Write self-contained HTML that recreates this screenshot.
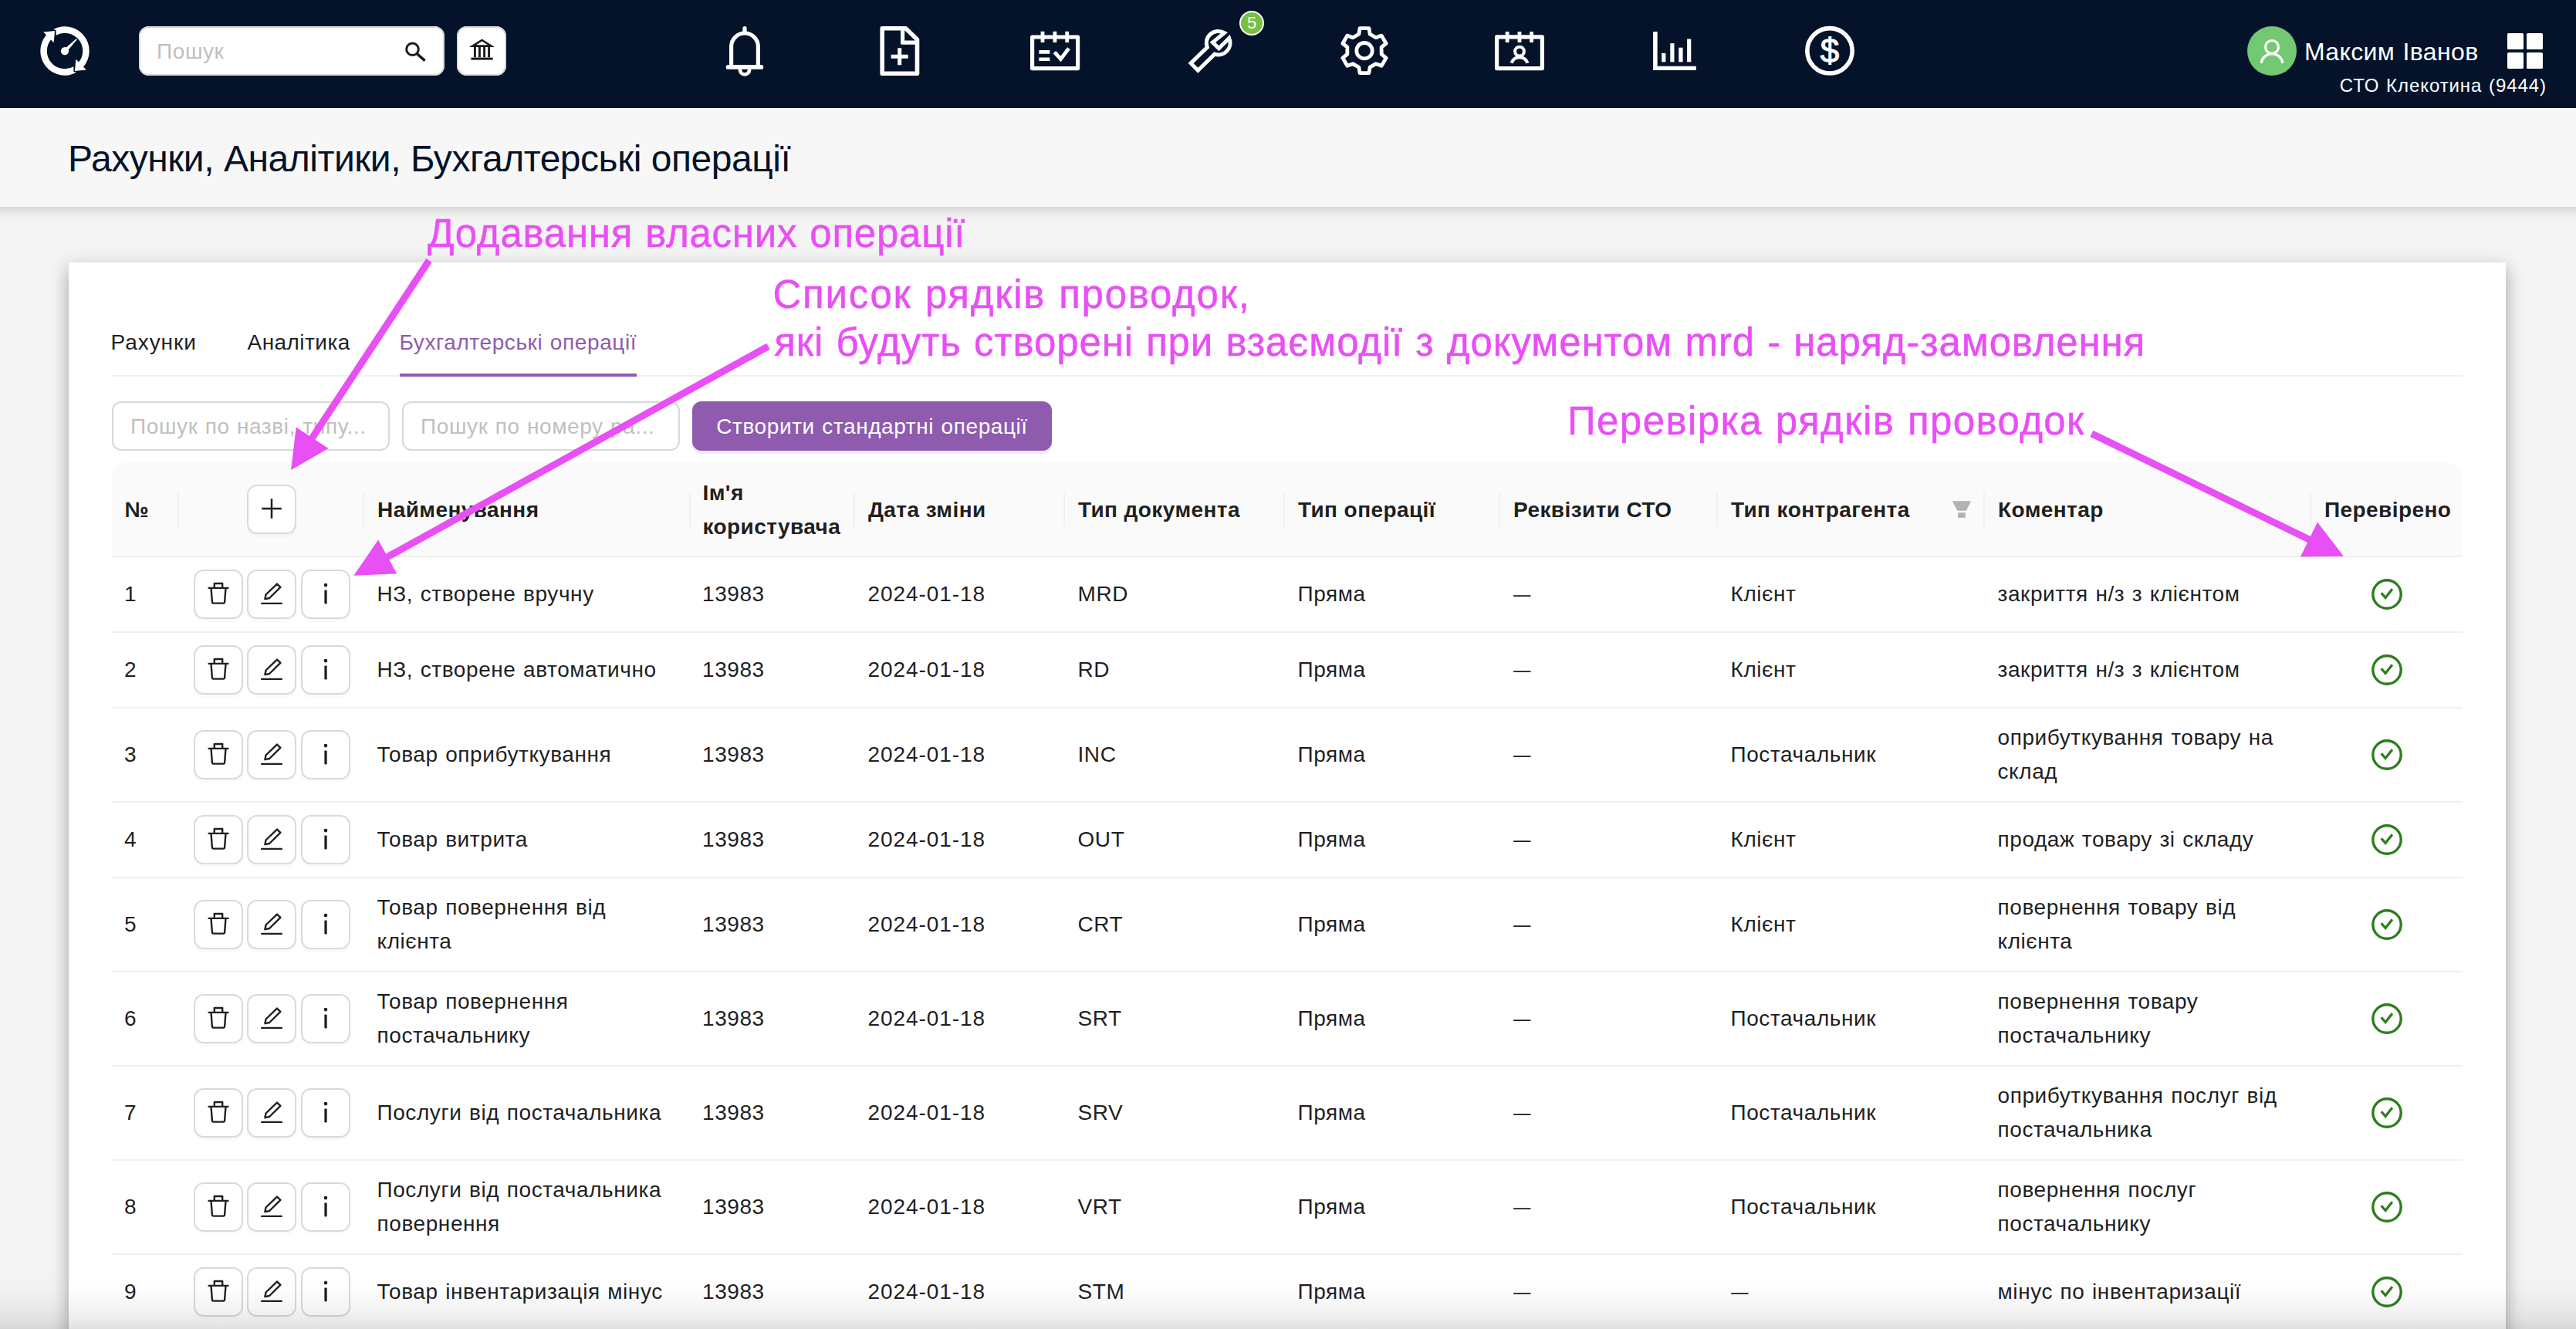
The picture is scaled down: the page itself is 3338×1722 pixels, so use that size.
<!DOCTYPE html>
<html lang="uk"><head><meta charset="utf-8"><title>Рахунки, Аналітики, Бухгалтерські операції</title>
<style>
*{margin:0;padding:0;box-sizing:border-box}
html,body{width:3338px;height:1722px;overflow:hidden;background:#f4f4f4}
body{position:relative;font-family:"Liberation Sans",sans-serif;font-size:28px;color:#1f1f1f;letter-spacing:.58px;word-spacing:1.2px}
.abs{position:absolute}
svg{display:block;overflow:visible}
.hdr{left:0;top:0;width:3338px;height:140px;background:#05132a}
.sub{left:-60px;top:140px;width:3458px;height:128px;background:#f7f7f7;box-shadow:0 4px 14px rgba(0,0,0,.17)}
.title{left:88px;top:176px;font-size:48px;line-height:60px;color:#05132a;letter-spacing:-.47px;word-spacing:0;white-space:nowrap}
.search{left:180px;top:34px;width:396px;height:64px;background:#fff;border-radius:13px;box-shadow:inset 0 0 0 2px #d9d9d9}
.search span{position:absolute;left:23px;top:11px;line-height:44px;color:#bfbfbf;font-size:28px;letter-spacing:.6px}
.bank{left:592px;top:34px;width:64px;height:64px;background:#fff;border-radius:13px;box-shadow:inset 0 0 0 2px #d9d9d9}
.uname{left:2986px;top:45px;font-size:32px;line-height:44px;color:#fff;letter-spacing:.35px;white-space:nowrap}
.usub{right:38px;top:96px;font-size:24px;line-height:30px;color:#fff;letter-spacing:.92px;white-space:nowrap}
.avatar{left:2912px;top:34px;width:64px;height:64px;border-radius:50%;background:#73c873}
.card{left:89px;top:340px;width:3158px;height:1500px;background:#fff;box-shadow:0 8px 22px rgba(0,0,0,.34)}
.tab{top:421.5px;line-height:44px;white-space:nowrap;letter-spacing:.85px}
.tabline{left:145px;top:486px;width:3046px;height:2px;background:#f0f0f0}
.ink{left:518px;top:484px;width:307px;height:4px;background:#8f5bae}
.inp{top:520px;width:360px;height:64px;border:2px solid #d9d9d9;border-radius:12px;background:#fff;color:#bfbfbf;line-height:60px;padding:1px 0 0 22px;letter-spacing:.62px;word-spacing:.8px;white-space:nowrap;overflow:hidden}
.pbtn{left:897px;top:520px;width:466px;height:64px;border-radius:12px;background:#8f5bae;color:#fff;line-height:66px;text-align:center;box-shadow:0 4px 0 rgba(143,91,174,.13);white-space:nowrap}
.thead{background:#fafafa;border-radius:16px 16px 0 0}
.hline,.rline{height:2px;background:#f0f0f0}
.sep{width:2px;height:45px;background:#f0f0f0}
.th,.td{display:flex;align-items:center;line-height:44px;white-space:nowrap}
.th{font-weight:700;letter-spacing:.42px;word-spacing:0}
.dt{letter-spacing:.92px}
.dash{display:inline-block;font-style:normal;transform:scaleX(.8);transform-origin:0 50%;letter-spacing:0}
.btn{width:64px;height:64px;background:#fff;border:2px solid #d9d9d9;border-radius:13px;box-shadow:0 4px 0 rgba(0,0,0,.02);display:flex;align-items:center;justify-content:center}
.btn svg{margin-top:-3px}
.fade{left:0;top:1650px;width:3338px;height:72px;background:linear-gradient(to bottom,rgba(0,0,0,0) 0,rgba(0,0,0,.012) 30%,rgba(0,0,0,.04) 60%,rgba(0,0,0,.075) 82%,rgba(0,0,0,.12) 100%)}
</style></head><body>
<div class="abs hdr"></div>
<svg class="abs" style="left:52px;top:34px" width="64" height="64" viewBox="0 0 64 64" fill="#fff"><path d="M17.31 3.91A31.7 31.7 0 0 1 56.02 52.69L59.87 56.62L44.98 57.98L46.33 42.81L50.04 46.59A23.2 23.2 0 0 0 20.65 11.77L20.65 5.3Z"/><path d="M17.31 3.91A31.7 31.7 0 0 1 56.02 52.69L59.87 56.62L44.98 57.98L46.33 42.81L50.04 46.59A23.2 23.2 0 0 0 20.65 11.77L20.65 5.3Z" transform="rotate(180 32 32)"/><circle cx="32" cy="32.1" r="5.15"/><path d="M33.2 28L46.8 16.2L47.8 17.2L36.2 30.9Z"/></svg>
<div class="abs search"><span>Пошук</span>
<svg class="abs" style="left:340px;top:16px" width="34" height="34" viewBox="0 0 34 34" fill="none" stroke="#1a1a1a" stroke-width="3" stroke-linecap="butt"><circle cx="14.5" cy="13.75" r="7.8"/><path d="M20 19.4L30.6 28.6" stroke-width="3.4"/></svg></div>
<div class="abs bank"><svg class="abs" style="left:17.5px;top:15px" width="29" height="30" viewBox="0 0 29 30" fill="none" stroke="#1a1a1a" stroke-width="2.8" stroke-linejoin="miter"><path d="M2.4 10.6L14.5 3L26.6 10.6Z" stroke-width="2.6"/><path d="M5.4 12V25.2M11.4 12V25.2M17.6 12V25.2M23.6 12V25.2" stroke-width="2.9"/><path d="M0.4 27.1H28.6" stroke-width="3"/></svg></div>
<svg class="abs" style="left:933px;top:34px" width="64" height="64" viewBox="0 0 64 64" fill="none" stroke="#fff" stroke-width="5.2" stroke-linecap="round" stroke-linejoin="round">
<path d="M32 2.6V6"/><path d="M14.6 52.6V26.4a17.4 17.4 0 0 1 34.8 0V52.6"/><path d="M10.6 52.9H53.4" stroke-width="5.8"/><path d="M26 56.4a6 6 0 0 0 12 0" stroke-width="4.8"/></svg>
<svg class="abs" style="left:1134px;top:34px" width="64" height="64" viewBox="0 0 64 64" fill="none" stroke="#fff" stroke-width="5.6" stroke-linejoin="round">
<path d="M9.2 2.8H39.6L54.5 17.2V61.2H9.2Z"/><path d="M35.6 3V21.2H54.2" stroke-width="5.2"/><path d="M31.7 28.2V50.2M20.7 39.2H42.7" stroke-width="5" stroke-linecap="butt"/></svg>
<svg class="abs" style="left:1335px;top:34px" width="64" height="64" viewBox="0 0 64 64" fill="none" stroke="#fff" stroke-width="5.2" stroke-linejoin="round">
<path d="M2.6 14H61.6V54.6H2.6Z"/><path d="M16 6.8V20.9M31.9 6.8V20.9M47.7 6.8V20.9" stroke-width="4.8"/><path d="M11.4 33.4H25.3M11.4 42.7H25.3" stroke-width="4.6"/><path d="M31.4 33.6L39.5 42.4L50 28.6" stroke-width="4.8" stroke-linejoin="miter"/></svg>
<svg class="abs" style="left:1536px;top:34px" width="64" height="64" viewBox="0 0 64 64" fill="none" stroke="#fff" stroke-width="5" stroke-linejoin="miter">
<path d="M50.6 8.6A15.4 15.4 0 0 0 28.3 27.4L7.1 47.9L16.3 57.2L37.9 36.2A15.4 15.4 0 0 0 56.8 15.4L43.4 28.8L35.4 20.9Z"/></svg>
<div class="abs" style="left:1606px;top:14px;width:32px;height:32px;border-radius:50%;background:#76c043;border:2px solid #fff;box-sizing:border-box;color:#fff;font-size:22px;line-height:28px;letter-spacing:0;text-align:center">5</div>
<svg class="abs" style="left:1736px;top:34px" width="64" height="64" viewBox="0 0 64 64" fill="none" stroke="#fff" stroke-width="4.8" stroke-linejoin="round">
<path d="M39.17 10.27L37.90 2.69L26.10 2.69L24.83 10.27L17.02 14.77L9.83 12.09L3.93 22.31L9.85 27.19L9.85 36.21L3.93 41.09L9.83 51.31L17.02 48.63L24.83 53.13L26.10 60.71L37.90 60.71L39.17 53.13L46.98 48.63L54.17 51.31L60.07 41.09L54.15 36.21L54.15 27.19L60.07 22.31L54.17 12.09L46.98 14.77Z"/><circle cx="32" cy="31.7" r="10.2"/></svg>
<svg class="abs" style="left:1937px;top:34px" width="64" height="64" viewBox="0 0 64 64" fill="none" stroke="#fff" stroke-width="5.2" stroke-linejoin="round">
<path d="M2.6 13.8H61.4V54.6H2.6Z"/><path d="M16.1 7V20.9M32 7V20.9M47.6 7V20.9" stroke-width="4.8"/><circle cx="32" cy="32.6" r="5.9" stroke-width="4"/><path d="M21.6 47.7a10.9 10.9 0 0 1 20.8 0" stroke-width="4.4"/></svg>
<svg class="abs" style="left:2138px;top:34px" width="64" height="64" viewBox="0 0 64 64" fill="#fff">
<path d="M4.1 7H9.7V51.8H59.8V57H4.1Z"/><rect x="15.2" y="34.9" width="5.2" height="11.4"/><rect x="26.3" y="22.1" width="5.2" height="24.2"/><rect x="37.3" y="27.7" width="5.3" height="18.6"/><rect x="48.1" y="16.5" width="5.2" height="29.8"/></svg>
<svg class="abs" style="left:2339px;top:34px" width="64" height="64" viewBox="0 0 64 64">
<circle cx="32" cy="31.8" r="29.2" fill="none" stroke="#fff" stroke-width="5.6"/><text x="32" y="47" text-anchor="middle" font-family="Liberation Sans, sans-serif" font-size="44" fill="#fff" stroke="#fff" stroke-width="1.1" letter-spacing="0">$</text></svg>
<div class="abs avatar"><svg class="abs" style="left:0;top:0" width="64" height="64" viewBox="0 0 64 64" fill="none" stroke="#fff" stroke-width="3.2" stroke-linecap="butt"><circle cx="32" cy="26.9" r="8.4"/><path d="M18.2 47.8a13.9 13.9 0 0 1 27.6 0"/></svg></div>
<div class="abs uname">Максим Іванов</div>
<svg class="abs" style="left:3249px;top:43px" width="46" height="46" viewBox="0 0 46 46" fill="#fff"><rect x="0" y="0" width="21" height="21" rx="1.6"/><rect x="25" y="0" width="21" height="21" rx="1.6"/><rect x="0" y="25" width="21" height="21" rx="1.6"/><rect x="25" y="25" width="21" height="21" rx="1.6"/></svg>
<div class="abs usub">СТО Клекотина (9444)</div>
<div class="abs sub"></div>
<div class="abs title">Рахунки, Аналітики, Бухгалтерські операції</div>
<div class="abs card"></div>
<div class="abs tab" style="left:143.5px;letter-spacing:.95px">Рахунки</div>
<div class="abs tab" style="left:320.5px;letter-spacing:.45px">Аналітика</div>
<div class="abs tab" style="left:517.5px;color:#8f5bae;letter-spacing:.6px">Бухгалтерські операції</div>
<div class="abs tabline"></div><div class="abs ink"></div>
<div class="abs inp" style="left:145px">Пошук по назві, типу...</div>
<div class="abs inp" style="left:521px">Пошук по номеру ра...</div>
<div class="abs pbtn">Створити стандартні операції</div>
<div class="abs thead" style="left:145px;top:600px;width:3046px;height:120px"></div>
<div class="abs hline" style="left:145px;top:720px;width:3046px"></div>
<div class="abs sep" style="left:230px;top:638px"></div>
<div class="abs th" style="left:161.5px;top:601px;height:120px;width:54px"><span>№</span></div>
<div class="abs sep" style="left:470px;top:638px"></div>
<div class="abs btn" style="left:320px;top:628px"><svg width="28" height="28" viewBox="0 0 28 28" fill="none" stroke="#1f1f1f" stroke-width="2.5" stroke-linecap="butt"><path d="M14 1.2V26.8M1.2 14H26.8"/></svg></div>
<div class="abs sep" style="left:893px;top:638px"></div>
<div class="abs th" style="left:489px;top:601px;height:120px;width:391px"><span>Найменування</span></div>
<div class="abs sep" style="left:1106px;top:638px"></div>
<div class="abs th" style="left:910.5px;top:601px;height:120px;width:181px"><span>Ім'я<br>користувача</span></div>
<div class="abs sep" style="left:1378px;top:638px"></div>
<div class="abs th" style="left:1125px;top:601px;height:120px;width:240px"><span>Дата зміни</span></div>
<div class="abs sep" style="left:1663px;top:638px"></div>
<div class="abs th" style="left:1397px;top:601px;height:120px;width:253px"><span>Тип документа</span></div>
<div class="abs sep" style="left:1942px;top:638px"></div>
<div class="abs th" style="left:1682px;top:601px;height:120px;width:247px"><span>Тип операції</span></div>
<div class="abs sep" style="left:2224px;top:638px"></div>
<div class="abs th" style="left:1961px;top:601px;height:120px;width:250px"><span>Реквізити СТО</span></div>
<div class="abs sep" style="left:2570px;top:638px"></div>
<div class="abs th" style="left:2243px;top:601px;height:120px;width:314px"><span>Тип контрагента</span></div>
<div class="abs sep" style="left:2993px;top:638px"></div>
<div class="abs th" style="left:2589px;top:601px;height:120px;width:391px"><span>Коментар</span></div>
<div class="abs th" style="left:3012px;top:601px;height:120px;width:165px"><span>Перевірено</span></div>
<svg class="abs" style="left:2529px;top:649px" width="26" height="22" viewBox="0 0 26 22" fill="#b3b3b3"><path d="M0.8 0.2H25.2L18.8 12.7H7.4Z"/><rect x="8" y="15.2" width="9.9" height="6.7"/></svg>
<div class="abs td" style="left:161.0px;top:722px;height:96px;width:54px"><span>1</span></div>
<div class="abs btn" style="left:251px;top:738.0px"><svg width="28" height="28" viewBox="0 0 27.2 28" fill="none" stroke="#1f1f1f" stroke-width="2.4" stroke-linejoin="round" stroke-linecap="round"><path d="M1.2 6.9H26"/><path d="M8.4 6.9V1H18.8V6.9" stroke-linecap="butt"/><path d="M4.1 6.9L5.5 25a1.7 1.7 0 0 0 1.7 1.6H20a1.7 1.7 0 0 0 1.7-1.6L23.1 6.9" stroke-linecap="butt"/></svg></div>
<div class="abs btn" style="left:320px;top:738.0px"><svg width="28" height="28" viewBox="0 0 27.2 28" fill="none" stroke="#1f1f1f" stroke-width="2.4" stroke-linejoin="round" stroke-linecap="round"><path d="M0.8 26.9H26.4"/><path d="M5 21.2L6.1 15.5L20.6 1.6L25 5.9L10.7 20Z"/></svg></div>
<div class="abs btn" style="left:390px;top:738.0px"><svg width="28" height="28" viewBox="0 0 27.2 28"><circle cx="13.6" cy="3.1" r="2.3" fill="#1f1f1f"/><rect x="12" y="9.6" width="3.3" height="17.8" rx="0.8" fill="#1f1f1f"/></svg></div>
<div class="abs td" style="left:488.5px;top:722px;height:96px;width:391px"><span>НЗ, створене вручну</span></div>
<div class="abs td" style="left:910.0px;top:722px;height:96px;width:181px"><span>13983</span></div>
<div class="abs td dt" style="left:1124.5px;top:722px;height:96px;width:240px"><span>2024-01-18</span></div>
<div class="abs td" style="left:1396.5px;top:722px;height:96px;width:253px"><span>MRD</span></div>
<div class="abs td" style="left:1681.5px;top:722px;height:96px;width:247px"><span>Пряма</span></div>
<div class="abs td" style="left:1960.5px;top:722px;height:96px;width:250px"><span><i class="dash">—</i></span></div>
<div class="abs td" style="left:2242.5px;top:722px;height:96px;width:314px"><span>Клієнт</span></div>
<div class="abs td" style="left:2588.5px;top:722px;height:96px;width:391px"><span>закриття н/з з клієнтом</span></div>
<div class="abs" style="left:3073px;top:750.0px;width:40px;height:40px"><svg width="40" height="40" viewBox="0 0 40 40" fill="none" stroke="#2e7d1f"><circle cx="20" cy="20" r="18.2" stroke-width="3.4"/><path d="M12.7 18.2L18.1 24.5L26.9 13.2" stroke-width="3.3" stroke-linejoin="miter"/></svg></div>
<div class="abs rline" style="left:145px;top:818px;width:3046px"></div>
<div class="abs td" style="left:161.0px;top:820px;height:96px;width:54px"><span>2</span></div>
<div class="abs btn" style="left:251px;top:836.0px"><svg width="28" height="28" viewBox="0 0 27.2 28" fill="none" stroke="#1f1f1f" stroke-width="2.4" stroke-linejoin="round" stroke-linecap="round"><path d="M1.2 6.9H26"/><path d="M8.4 6.9V1H18.8V6.9" stroke-linecap="butt"/><path d="M4.1 6.9L5.5 25a1.7 1.7 0 0 0 1.7 1.6H20a1.7 1.7 0 0 0 1.7-1.6L23.1 6.9" stroke-linecap="butt"/></svg></div>
<div class="abs btn" style="left:320px;top:836.0px"><svg width="28" height="28" viewBox="0 0 27.2 28" fill="none" stroke="#1f1f1f" stroke-width="2.4" stroke-linejoin="round" stroke-linecap="round"><path d="M0.8 26.9H26.4"/><path d="M5 21.2L6.1 15.5L20.6 1.6L25 5.9L10.7 20Z"/></svg></div>
<div class="abs btn" style="left:390px;top:836.0px"><svg width="28" height="28" viewBox="0 0 27.2 28"><circle cx="13.6" cy="3.1" r="2.3" fill="#1f1f1f"/><rect x="12" y="9.6" width="3.3" height="17.8" rx="0.8" fill="#1f1f1f"/></svg></div>
<div class="abs td" style="left:488.5px;top:820px;height:96px;width:391px"><span>НЗ, створене автоматично</span></div>
<div class="abs td" style="left:910.0px;top:820px;height:96px;width:181px"><span>13983</span></div>
<div class="abs td dt" style="left:1124.5px;top:820px;height:96px;width:240px"><span>2024-01-18</span></div>
<div class="abs td" style="left:1396.5px;top:820px;height:96px;width:253px"><span>RD</span></div>
<div class="abs td" style="left:1681.5px;top:820px;height:96px;width:247px"><span>Пряма</span></div>
<div class="abs td" style="left:1960.5px;top:820px;height:96px;width:250px"><span><i class="dash">—</i></span></div>
<div class="abs td" style="left:2242.5px;top:820px;height:96px;width:314px"><span>Клієнт</span></div>
<div class="abs td" style="left:2588.5px;top:820px;height:96px;width:391px"><span>закриття н/з з клієнтом</span></div>
<div class="abs" style="left:3073px;top:848.0px;width:40px;height:40px"><svg width="40" height="40" viewBox="0 0 40 40" fill="none" stroke="#2e7d1f"><circle cx="20" cy="20" r="18.2" stroke-width="3.4"/><path d="M12.7 18.2L18.1 24.5L26.9 13.2" stroke-width="3.3" stroke-linejoin="miter"/></svg></div>
<div class="abs rline" style="left:145px;top:916px;width:3046px"></div>
<div class="abs td" style="left:161.0px;top:918px;height:120px;width:54px"><span>3</span></div>
<div class="abs btn" style="left:251px;top:946.0px"><svg width="28" height="28" viewBox="0 0 27.2 28" fill="none" stroke="#1f1f1f" stroke-width="2.4" stroke-linejoin="round" stroke-linecap="round"><path d="M1.2 6.9H26"/><path d="M8.4 6.9V1H18.8V6.9" stroke-linecap="butt"/><path d="M4.1 6.9L5.5 25a1.7 1.7 0 0 0 1.7 1.6H20a1.7 1.7 0 0 0 1.7-1.6L23.1 6.9" stroke-linecap="butt"/></svg></div>
<div class="abs btn" style="left:320px;top:946.0px"><svg width="28" height="28" viewBox="0 0 27.2 28" fill="none" stroke="#1f1f1f" stroke-width="2.4" stroke-linejoin="round" stroke-linecap="round"><path d="M0.8 26.9H26.4"/><path d="M5 21.2L6.1 15.5L20.6 1.6L25 5.9L10.7 20Z"/></svg></div>
<div class="abs btn" style="left:390px;top:946.0px"><svg width="28" height="28" viewBox="0 0 27.2 28"><circle cx="13.6" cy="3.1" r="2.3" fill="#1f1f1f"/><rect x="12" y="9.6" width="3.3" height="17.8" rx="0.8" fill="#1f1f1f"/></svg></div>
<div class="abs td" style="left:488.5px;top:918px;height:120px;width:391px"><span>Товар оприбуткування</span></div>
<div class="abs td" style="left:910.0px;top:918px;height:120px;width:181px"><span>13983</span></div>
<div class="abs td dt" style="left:1124.5px;top:918px;height:120px;width:240px"><span>2024-01-18</span></div>
<div class="abs td" style="left:1396.5px;top:918px;height:120px;width:253px"><span>INC</span></div>
<div class="abs td" style="left:1681.5px;top:918px;height:120px;width:247px"><span>Пряма</span></div>
<div class="abs td" style="left:1960.5px;top:918px;height:120px;width:250px"><span><i class="dash">—</i></span></div>
<div class="abs td" style="left:2242.5px;top:918px;height:120px;width:314px"><span>Постачальник</span></div>
<div class="abs td" style="left:2588.5px;top:918px;height:120px;width:391px"><span>оприбуткування товару на<br>склад</span></div>
<div class="abs" style="left:3073px;top:958.0px;width:40px;height:40px"><svg width="40" height="40" viewBox="0 0 40 40" fill="none" stroke="#2e7d1f"><circle cx="20" cy="20" r="18.2" stroke-width="3.4"/><path d="M12.7 18.2L18.1 24.5L26.9 13.2" stroke-width="3.3" stroke-linejoin="miter"/></svg></div>
<div class="abs rline" style="left:145px;top:1038px;width:3046px"></div>
<div class="abs td" style="left:161.0px;top:1040px;height:96px;width:54px"><span>4</span></div>
<div class="abs btn" style="left:251px;top:1056.0px"><svg width="28" height="28" viewBox="0 0 27.2 28" fill="none" stroke="#1f1f1f" stroke-width="2.4" stroke-linejoin="round" stroke-linecap="round"><path d="M1.2 6.9H26"/><path d="M8.4 6.9V1H18.8V6.9" stroke-linecap="butt"/><path d="M4.1 6.9L5.5 25a1.7 1.7 0 0 0 1.7 1.6H20a1.7 1.7 0 0 0 1.7-1.6L23.1 6.9" stroke-linecap="butt"/></svg></div>
<div class="abs btn" style="left:320px;top:1056.0px"><svg width="28" height="28" viewBox="0 0 27.2 28" fill="none" stroke="#1f1f1f" stroke-width="2.4" stroke-linejoin="round" stroke-linecap="round"><path d="M0.8 26.9H26.4"/><path d="M5 21.2L6.1 15.5L20.6 1.6L25 5.9L10.7 20Z"/></svg></div>
<div class="abs btn" style="left:390px;top:1056.0px"><svg width="28" height="28" viewBox="0 0 27.2 28"><circle cx="13.6" cy="3.1" r="2.3" fill="#1f1f1f"/><rect x="12" y="9.6" width="3.3" height="17.8" rx="0.8" fill="#1f1f1f"/></svg></div>
<div class="abs td" style="left:488.5px;top:1040px;height:96px;width:391px"><span>Товар витрита</span></div>
<div class="abs td" style="left:910.0px;top:1040px;height:96px;width:181px"><span>13983</span></div>
<div class="abs td dt" style="left:1124.5px;top:1040px;height:96px;width:240px"><span>2024-01-18</span></div>
<div class="abs td" style="left:1396.5px;top:1040px;height:96px;width:253px"><span>OUT</span></div>
<div class="abs td" style="left:1681.5px;top:1040px;height:96px;width:247px"><span>Пряма</span></div>
<div class="abs td" style="left:1960.5px;top:1040px;height:96px;width:250px"><span><i class="dash">—</i></span></div>
<div class="abs td" style="left:2242.5px;top:1040px;height:96px;width:314px"><span>Клієнт</span></div>
<div class="abs td" style="left:2588.5px;top:1040px;height:96px;width:391px"><span>продаж товару зі складу</span></div>
<div class="abs" style="left:3073px;top:1068.0px;width:40px;height:40px"><svg width="40" height="40" viewBox="0 0 40 40" fill="none" stroke="#2e7d1f"><circle cx="20" cy="20" r="18.2" stroke-width="3.4"/><path d="M12.7 18.2L18.1 24.5L26.9 13.2" stroke-width="3.3" stroke-linejoin="miter"/></svg></div>
<div class="abs rline" style="left:145px;top:1136px;width:3046px"></div>
<div class="abs td" style="left:161.0px;top:1138px;height:120px;width:54px"><span>5</span></div>
<div class="abs btn" style="left:251px;top:1166.0px"><svg width="28" height="28" viewBox="0 0 27.2 28" fill="none" stroke="#1f1f1f" stroke-width="2.4" stroke-linejoin="round" stroke-linecap="round"><path d="M1.2 6.9H26"/><path d="M8.4 6.9V1H18.8V6.9" stroke-linecap="butt"/><path d="M4.1 6.9L5.5 25a1.7 1.7 0 0 0 1.7 1.6H20a1.7 1.7 0 0 0 1.7-1.6L23.1 6.9" stroke-linecap="butt"/></svg></div>
<div class="abs btn" style="left:320px;top:1166.0px"><svg width="28" height="28" viewBox="0 0 27.2 28" fill="none" stroke="#1f1f1f" stroke-width="2.4" stroke-linejoin="round" stroke-linecap="round"><path d="M0.8 26.9H26.4"/><path d="M5 21.2L6.1 15.5L20.6 1.6L25 5.9L10.7 20Z"/></svg></div>
<div class="abs btn" style="left:390px;top:1166.0px"><svg width="28" height="28" viewBox="0 0 27.2 28"><circle cx="13.6" cy="3.1" r="2.3" fill="#1f1f1f"/><rect x="12" y="9.6" width="3.3" height="17.8" rx="0.8" fill="#1f1f1f"/></svg></div>
<div class="abs td" style="left:488.5px;top:1138px;height:120px;width:391px"><span>Товар повернення від<br>клієнта</span></div>
<div class="abs td" style="left:910.0px;top:1138px;height:120px;width:181px"><span>13983</span></div>
<div class="abs td dt" style="left:1124.5px;top:1138px;height:120px;width:240px"><span>2024-01-18</span></div>
<div class="abs td" style="left:1396.5px;top:1138px;height:120px;width:253px"><span>CRT</span></div>
<div class="abs td" style="left:1681.5px;top:1138px;height:120px;width:247px"><span>Пряма</span></div>
<div class="abs td" style="left:1960.5px;top:1138px;height:120px;width:250px"><span><i class="dash">—</i></span></div>
<div class="abs td" style="left:2242.5px;top:1138px;height:120px;width:314px"><span>Клієнт</span></div>
<div class="abs td" style="left:2588.5px;top:1138px;height:120px;width:391px"><span>повернення товару від<br>клієнта</span></div>
<div class="abs" style="left:3073px;top:1178.0px;width:40px;height:40px"><svg width="40" height="40" viewBox="0 0 40 40" fill="none" stroke="#2e7d1f"><circle cx="20" cy="20" r="18.2" stroke-width="3.4"/><path d="M12.7 18.2L18.1 24.5L26.9 13.2" stroke-width="3.3" stroke-linejoin="miter"/></svg></div>
<div class="abs rline" style="left:145px;top:1258px;width:3046px"></div>
<div class="abs td" style="left:161.0px;top:1260px;height:120px;width:54px"><span>6</span></div>
<div class="abs btn" style="left:251px;top:1288.0px"><svg width="28" height="28" viewBox="0 0 27.2 28" fill="none" stroke="#1f1f1f" stroke-width="2.4" stroke-linejoin="round" stroke-linecap="round"><path d="M1.2 6.9H26"/><path d="M8.4 6.9V1H18.8V6.9" stroke-linecap="butt"/><path d="M4.1 6.9L5.5 25a1.7 1.7 0 0 0 1.7 1.6H20a1.7 1.7 0 0 0 1.7-1.6L23.1 6.9" stroke-linecap="butt"/></svg></div>
<div class="abs btn" style="left:320px;top:1288.0px"><svg width="28" height="28" viewBox="0 0 27.2 28" fill="none" stroke="#1f1f1f" stroke-width="2.4" stroke-linejoin="round" stroke-linecap="round"><path d="M0.8 26.9H26.4"/><path d="M5 21.2L6.1 15.5L20.6 1.6L25 5.9L10.7 20Z"/></svg></div>
<div class="abs btn" style="left:390px;top:1288.0px"><svg width="28" height="28" viewBox="0 0 27.2 28"><circle cx="13.6" cy="3.1" r="2.3" fill="#1f1f1f"/><rect x="12" y="9.6" width="3.3" height="17.8" rx="0.8" fill="#1f1f1f"/></svg></div>
<div class="abs td" style="left:488.5px;top:1260px;height:120px;width:391px"><span>Товар повернення<br>постачальнику</span></div>
<div class="abs td" style="left:910.0px;top:1260px;height:120px;width:181px"><span>13983</span></div>
<div class="abs td dt" style="left:1124.5px;top:1260px;height:120px;width:240px"><span>2024-01-18</span></div>
<div class="abs td" style="left:1396.5px;top:1260px;height:120px;width:253px"><span>SRT</span></div>
<div class="abs td" style="left:1681.5px;top:1260px;height:120px;width:247px"><span>Пряма</span></div>
<div class="abs td" style="left:1960.5px;top:1260px;height:120px;width:250px"><span><i class="dash">—</i></span></div>
<div class="abs td" style="left:2242.5px;top:1260px;height:120px;width:314px"><span>Постачальник</span></div>
<div class="abs td" style="left:2588.5px;top:1260px;height:120px;width:391px"><span>повернення товару<br>постачальнику</span></div>
<div class="abs" style="left:3073px;top:1300.0px;width:40px;height:40px"><svg width="40" height="40" viewBox="0 0 40 40" fill="none" stroke="#2e7d1f"><circle cx="20" cy="20" r="18.2" stroke-width="3.4"/><path d="M12.7 18.2L18.1 24.5L26.9 13.2" stroke-width="3.3" stroke-linejoin="miter"/></svg></div>
<div class="abs rline" style="left:145px;top:1380px;width:3046px"></div>
<div class="abs td" style="left:161.0px;top:1382px;height:120px;width:54px"><span>7</span></div>
<div class="abs btn" style="left:251px;top:1410.0px"><svg width="28" height="28" viewBox="0 0 27.2 28" fill="none" stroke="#1f1f1f" stroke-width="2.4" stroke-linejoin="round" stroke-linecap="round"><path d="M1.2 6.9H26"/><path d="M8.4 6.9V1H18.8V6.9" stroke-linecap="butt"/><path d="M4.1 6.9L5.5 25a1.7 1.7 0 0 0 1.7 1.6H20a1.7 1.7 0 0 0 1.7-1.6L23.1 6.9" stroke-linecap="butt"/></svg></div>
<div class="abs btn" style="left:320px;top:1410.0px"><svg width="28" height="28" viewBox="0 0 27.2 28" fill="none" stroke="#1f1f1f" stroke-width="2.4" stroke-linejoin="round" stroke-linecap="round"><path d="M0.8 26.9H26.4"/><path d="M5 21.2L6.1 15.5L20.6 1.6L25 5.9L10.7 20Z"/></svg></div>
<div class="abs btn" style="left:390px;top:1410.0px"><svg width="28" height="28" viewBox="0 0 27.2 28"><circle cx="13.6" cy="3.1" r="2.3" fill="#1f1f1f"/><rect x="12" y="9.6" width="3.3" height="17.8" rx="0.8" fill="#1f1f1f"/></svg></div>
<div class="abs td" style="left:488.5px;top:1382px;height:120px;width:391px"><span>Послуги від постачальника</span></div>
<div class="abs td" style="left:910.0px;top:1382px;height:120px;width:181px"><span>13983</span></div>
<div class="abs td dt" style="left:1124.5px;top:1382px;height:120px;width:240px"><span>2024-01-18</span></div>
<div class="abs td" style="left:1396.5px;top:1382px;height:120px;width:253px"><span>SRV</span></div>
<div class="abs td" style="left:1681.5px;top:1382px;height:120px;width:247px"><span>Пряма</span></div>
<div class="abs td" style="left:1960.5px;top:1382px;height:120px;width:250px"><span><i class="dash">—</i></span></div>
<div class="abs td" style="left:2242.5px;top:1382px;height:120px;width:314px"><span>Постачальник</span></div>
<div class="abs td" style="left:2588.5px;top:1382px;height:120px;width:391px"><span>оприбуткування послуг від<br>постачальника</span></div>
<div class="abs" style="left:3073px;top:1422.0px;width:40px;height:40px"><svg width="40" height="40" viewBox="0 0 40 40" fill="none" stroke="#2e7d1f"><circle cx="20" cy="20" r="18.2" stroke-width="3.4"/><path d="M12.7 18.2L18.1 24.5L26.9 13.2" stroke-width="3.3" stroke-linejoin="miter"/></svg></div>
<div class="abs rline" style="left:145px;top:1502px;width:3046px"></div>
<div class="abs td" style="left:161.0px;top:1504px;height:120px;width:54px"><span>8</span></div>
<div class="abs btn" style="left:251px;top:1532.0px"><svg width="28" height="28" viewBox="0 0 27.2 28" fill="none" stroke="#1f1f1f" stroke-width="2.4" stroke-linejoin="round" stroke-linecap="round"><path d="M1.2 6.9H26"/><path d="M8.4 6.9V1H18.8V6.9" stroke-linecap="butt"/><path d="M4.1 6.9L5.5 25a1.7 1.7 0 0 0 1.7 1.6H20a1.7 1.7 0 0 0 1.7-1.6L23.1 6.9" stroke-linecap="butt"/></svg></div>
<div class="abs btn" style="left:320px;top:1532.0px"><svg width="28" height="28" viewBox="0 0 27.2 28" fill="none" stroke="#1f1f1f" stroke-width="2.4" stroke-linejoin="round" stroke-linecap="round"><path d="M0.8 26.9H26.4"/><path d="M5 21.2L6.1 15.5L20.6 1.6L25 5.9L10.7 20Z"/></svg></div>
<div class="abs btn" style="left:390px;top:1532.0px"><svg width="28" height="28" viewBox="0 0 27.2 28"><circle cx="13.6" cy="3.1" r="2.3" fill="#1f1f1f"/><rect x="12" y="9.6" width="3.3" height="17.8" rx="0.8" fill="#1f1f1f"/></svg></div>
<div class="abs td" style="left:488.5px;top:1504px;height:120px;width:391px"><span>Послуги від постачальника<br>повернення</span></div>
<div class="abs td" style="left:910.0px;top:1504px;height:120px;width:181px"><span>13983</span></div>
<div class="abs td dt" style="left:1124.5px;top:1504px;height:120px;width:240px"><span>2024-01-18</span></div>
<div class="abs td" style="left:1396.5px;top:1504px;height:120px;width:253px"><span>VRT</span></div>
<div class="abs td" style="left:1681.5px;top:1504px;height:120px;width:247px"><span>Пряма</span></div>
<div class="abs td" style="left:1960.5px;top:1504px;height:120px;width:250px"><span><i class="dash">—</i></span></div>
<div class="abs td" style="left:2242.5px;top:1504px;height:120px;width:314px"><span>Постачальник</span></div>
<div class="abs td" style="left:2588.5px;top:1504px;height:120px;width:391px"><span>повернення послуг<br>постачальнику</span></div>
<div class="abs" style="left:3073px;top:1544.0px;width:40px;height:40px"><svg width="40" height="40" viewBox="0 0 40 40" fill="none" stroke="#2e7d1f"><circle cx="20" cy="20" r="18.2" stroke-width="3.4"/><path d="M12.7 18.2L18.1 24.5L26.9 13.2" stroke-width="3.3" stroke-linejoin="miter"/></svg></div>
<div class="abs rline" style="left:145px;top:1624px;width:3046px"></div>
<div class="abs td" style="left:161.0px;top:1626px;height:96px;width:54px"><span>9</span></div>
<div class="abs btn" style="left:251px;top:1642.0px"><svg width="28" height="28" viewBox="0 0 27.2 28" fill="none" stroke="#1f1f1f" stroke-width="2.4" stroke-linejoin="round" stroke-linecap="round"><path d="M1.2 6.9H26"/><path d="M8.4 6.9V1H18.8V6.9" stroke-linecap="butt"/><path d="M4.1 6.9L5.5 25a1.7 1.7 0 0 0 1.7 1.6H20a1.7 1.7 0 0 0 1.7-1.6L23.1 6.9" stroke-linecap="butt"/></svg></div>
<div class="abs btn" style="left:320px;top:1642.0px"><svg width="28" height="28" viewBox="0 0 27.2 28" fill="none" stroke="#1f1f1f" stroke-width="2.4" stroke-linejoin="round" stroke-linecap="round"><path d="M0.8 26.9H26.4"/><path d="M5 21.2L6.1 15.5L20.6 1.6L25 5.9L10.7 20Z"/></svg></div>
<div class="abs btn" style="left:390px;top:1642.0px"><svg width="28" height="28" viewBox="0 0 27.2 28"><circle cx="13.6" cy="3.1" r="2.3" fill="#1f1f1f"/><rect x="12" y="9.6" width="3.3" height="17.8" rx="0.8" fill="#1f1f1f"/></svg></div>
<div class="abs td" style="left:488.5px;top:1626px;height:96px;width:391px"><span>Товар інвентаризація мінус</span></div>
<div class="abs td" style="left:910.0px;top:1626px;height:96px;width:181px"><span>13983</span></div>
<div class="abs td dt" style="left:1124.5px;top:1626px;height:96px;width:240px"><span>2024-01-18</span></div>
<div class="abs td" style="left:1396.5px;top:1626px;height:96px;width:253px"><span>STM</span></div>
<div class="abs td" style="left:1681.5px;top:1626px;height:96px;width:247px"><span>Пряма</span></div>
<div class="abs td" style="left:1960.5px;top:1626px;height:96px;width:250px"><span><i class="dash">—</i></span></div>
<div class="abs td" style="left:2242.5px;top:1626px;height:96px;width:314px"><span><i class="dash">—</i></span></div>
<div class="abs td" style="left:2588.5px;top:1626px;height:96px;width:391px"><span>мінус по інвентаризації</span></div>
<div class="abs" style="left:3073px;top:1654.0px;width:40px;height:40px"><svg width="40" height="40" viewBox="0 0 40 40" fill="none" stroke="#2e7d1f"><circle cx="20" cy="20" r="18.2" stroke-width="3.4"/><path d="M12.7 18.2L18.1 24.5L26.9 13.2" stroke-width="3.3" stroke-linejoin="miter"/></svg></div>
<div class="abs rline" style="left:145px;top:1722px;width:3046px"></div>
<div class="abs fade"></div>
<svg class="abs" style="left:0;top:0" width="3338" height="1722" viewBox="0 0 3338 1722">
<line x1="556.0" y1="337.5" x2="403.5" y2="569.0" stroke="#e84ff5" stroke-width="9.0"/><polygon points="377.1,609.1 383.7,553.6 425.5,581.1" fill="#e84ff5"/>
<line x1="995.6" y1="448.8" x2="500.4" y2="722.5" stroke="#e84ff5" stroke-width="9.0"/><polygon points="458.4,745.7 490.1,699.6 514.3,743.4" fill="#e84ff5"/>
<line x1="2710.4" y1="561.9" x2="2993.7" y2="699.8" stroke="#e84ff5" stroke-width="9.0"/><polygon points="3036.9,720.8 2981.0,721.4 3002.9,676.4" fill="#e84ff5"/>
<text x="554" y="320.3" font-family="Liberation Sans, sans-serif" font-size="51" fill="#e84ff5" stroke="#e84ff5" stroke-width="0.5" textLength="697" lengthAdjust="spacing">Додавання власних операції</text>
<text x="1001.5" y="398.9" font-family="Liberation Sans, sans-serif" font-size="51" fill="#e84ff5" stroke="#e84ff5" stroke-width="0.5" textLength="618" lengthAdjust="spacing">Список рядків проводок,</text>
<text x="1003.3" y="460.8" font-family="Liberation Sans, sans-serif" font-size="51" fill="#e84ff5" stroke="#e84ff5" stroke-width="0.5" textLength="1776.5" lengthAdjust="spacing">які будуть створені при взаємодії з документом mrd - наряд-замовлення</text>
<text x="2031" y="562.6" font-family="Liberation Sans, sans-serif" font-size="51" fill="#e84ff5" stroke="#e84ff5" stroke-width="0.5" textLength="670" lengthAdjust="spacing">Перевірка рядків проводок</text>
</svg>
</body></html>
